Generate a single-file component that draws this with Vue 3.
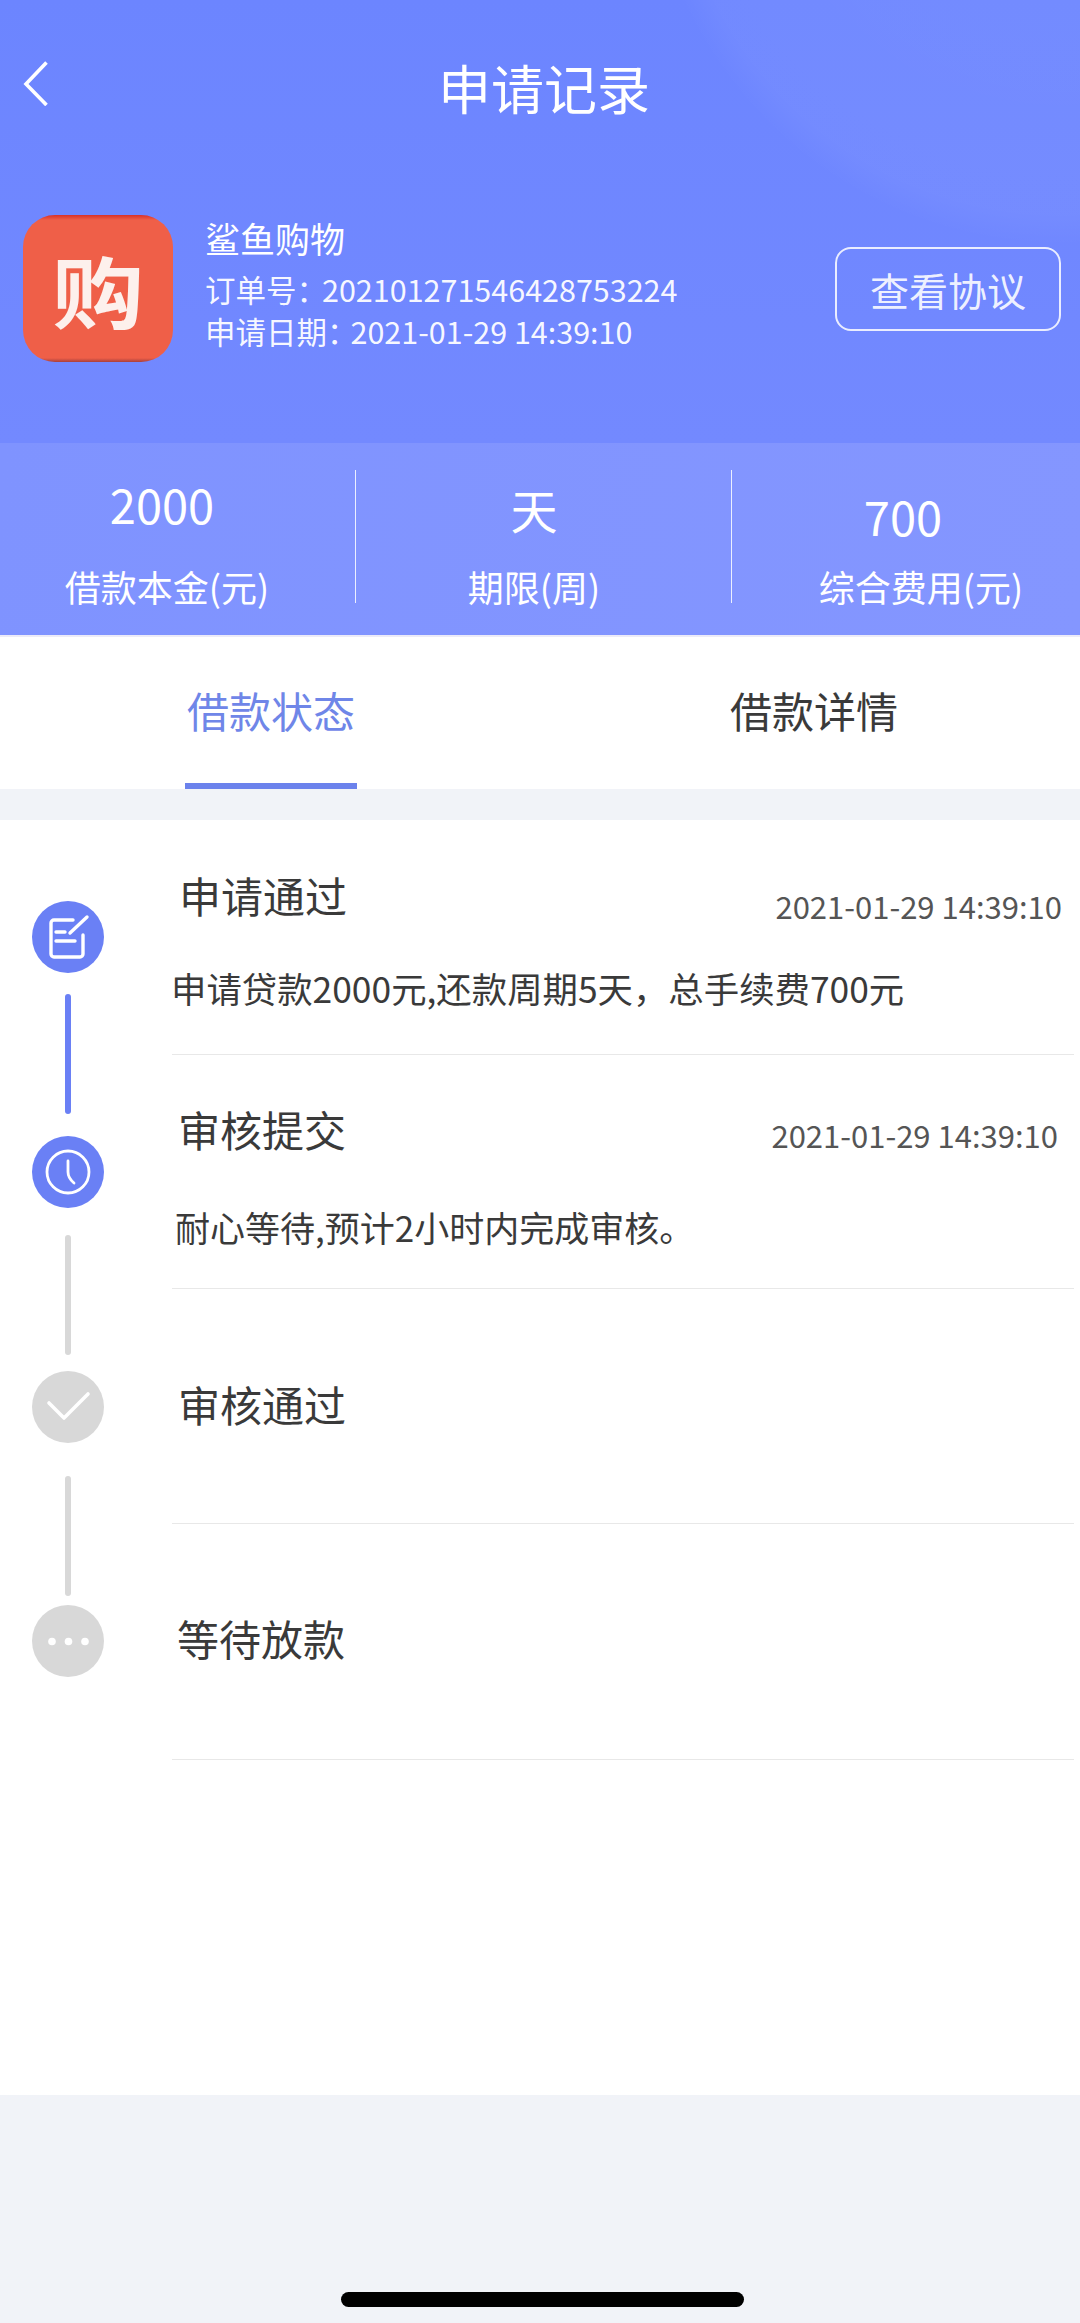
<template>
  <div class="page">
    <header class="head">
      <nav class="nav">
        <svg class="back" viewBox="0 0 25 45" fill="none" stroke="#fff" stroke-width="3.6">
          <path d="M23.5 1.5 3 23l20.5 21" />
        </svg>
        <h1 class="title">申请记录</h1>
      </nav>
      <div class="info">
        <div class="logo"><span>购</span></div>
        <div class="meta">
          <p class="shop">鲨鱼购物</p>
          <p class="line"><span class="line-key line-key--no">订单号：</span>{{ order.no }}</p>
          <p class="line line--date"><span class="line-key line-key--date">申请日期：</span>{{ order.date }}</p>
        </div>
        <button class="agreement">查看协议</button>
      </div>
    </header>

    <section class="stats">
      <div v-for="s in stats" :key="s.label" class="stat" :class="s.cls">
        <span class="stat-value">{{ s.value }}</span>
        <span class="stat-label">{{ s.label }}</span>
      </div>
    </section>

    <div class="tabs">
      <div class="tab tab--on">借款状态</div>
      <div class="tab">借款详情</div>
    </div>

    <main class="timeline">
      <div class="rail">
        <template v-for="(step, i) in steps" :key="step.title">
          <div v-if="i > 0" class="link" :class="[step.link, { 'link--on': step.done }]"></div>
          <div class="dot" :class="{ 'dot--on': step.done }">
            <svg viewBox="0 0 72 72" fill="none" stroke="#fff" stroke-linecap="round" stroke-linejoin="round">
              <g v-if="step.icon === 'note'" stroke-width="3.4">
                <path d="M41 19H22a3 3 0 0 0-3 3v31a3 3 0 0 0 3 3h26a3 3 0 0 0 3-3V34" />
                <path d="M38 32 55 16M24 31h9M24 40h19" />
              </g>
              <g v-else-if="step.icon === 'clock'" stroke-width="2.8">
                <circle cx="36" cy="36" r="21" />
                <path d="M36 25v11q0 6 6 11" />
              </g>
              <path v-else-if="step.icon === 'check'" d="M17 32l15 15 24-24" stroke-width="3.6" />
              <g v-else fill="#fff" stroke="none">
                <circle cx="20" cy="36.500" r="3.800" />
                <circle cx="36.500" cy="36.500" r="3.800" />
                <circle cx="53" cy="36.500" r="3.800" />
              </g>
            </svg>
          </div>
        </template>
      </div>
      <div class="rows">
        <div v-for="step in steps" :key="step.title" class="row" :class="step.cls">
          <div class="row-top">
            <span class="row-title">{{ step.title }}</span>
            <span v-if="step.time" class="row-time">{{ step.time }}</span>
          </div>
          <p v-if="step.desc" class="row-desc">{{ step.desc }}</p>
        </div>
      </div>
    </main>

    <footer class="foot">
      <div class="home-bar"></div>
    </footer>
  </div>
</template>

<script setup>
const order = {
  no: '202101271546428753224',
  date: '2021-01-29 14:39:10',
}

const stats = [
  { value: '2000', label: '借款本金(元)', cls: 'stat--a' },
  { value: '天', label: '期限(周)', cls: 'stat--b' },
  { value: '700', label: '综合费用(元)', cls: 'stat--c' },
]

const steps = [
  {
    title: '申请通过',
    time: '2021-01-29 14:39:10',
    desc: '申请贷款2000元,还款周期5天，总手续费700元',
    icon: 'note',
    done: true,
    cls: 'row--a',
  },
  {
    title: '审核提交',
    time: '2021-01-29 14:39:10',
    desc: '耐心等待,预计2小时内完成审核。',
    icon: 'clock',
    done: true,
    cls: 'row--b',
    link: 'link--a',
  },
  { title: '审核通过', icon: 'check', done: false, cls: 'row--c', link: 'link--b' },
  { title: '等待放款', icon: 'more', done: false, cls: 'row--d', link: 'link--c' },
]
</script>

<style>
html,
body {
  margin: 0;
  background: #f1f3f8;
}
</style>

<style scoped>
.page {
  width: 1080px;
  height: 2323px;
  display: flex;
  flex-direction: column;
  overflow: hidden;
  background: #f1f3f8;
  font-family: "Noto Sans CJK SC", "Noto Sans", sans-serif;
}

p,
h1 {
  margin: 0;
  font-weight: 400;
}

.head {
  height: 443px;
  color: #fff;
  background:
    radial-gradient(circle at 1060px -170px, rgba(255, 255, 255, 0.06) 0, rgba(255, 255, 255, 0.04) 385px, rgba(255, 255, 255, 0) 415px),
    linear-gradient(180deg, #6c85ff 0%, #7389ff 100%);
}

.nav {
  height: 180px;
  display: flex;
  align-items: center;
  padding-left: 23px;
}

.back {
  width: 25px;
  height: 45px;
  margin-top: -13px;
}

.title {
  flex: 1;
  padding: 0 40px 6px 0;
  text-align: center;
  font-size: 53px;
  line-height: 60px;
}

.info {
  display: flex;
  align-items: flex-start;
  padding: 35px 19px 0 23px;
}

.logo {
  width: 150px;
  height: 147px;
  flex: none;
  display: flex;
  align-items: center;
  justify-content: center;
  border-radius: 32px;
  background: linear-gradient(180deg, #d9302a 0, #ef5f48 5px, #ef5f48 143px, #a8403e 147px);
  font-size: 92px;
  font-weight: 700;
  line-height: 1;
  color: #fdf0ec;
}

.logo span {
  transform: scaleY(0.85);
}

.meta {
  padding: 5px 0 0 32px;
}

.shop {
  font-size: 35px;
  line-height: 36px;
}

.line {
  font-size: 30.500px;
  line-height: 41px;
  white-space: nowrap;
  color: rgba(255, 255, 255, 0.95);
}

.line--date {
  margin-top: 1px;
}

.line-key--no {
  margin-right: -5px;
}

.line-key--date {
  margin-right: -7px;
}

.shop + .line {
  margin-top: 13px;
}

.agreement {
  width: 226px;
  height: 84px;
  margin: 32px 0 0 auto;
  padding: 0;
  border: 2px solid rgba(255, 255, 255, 0.85);
  border-radius: 16px;
  background: transparent;
  font: inherit;
  font-size: 39px;
  color: rgba(255, 255, 255, 0.9);
}

.stats {
  height: 192px;
  flex: none;
  display: flex;
  color: #fff;
  background: linear-gradient(100deg, #7f93ff, #8496ff);
  border-bottom: 2px solid #ecebf8;
}

.stat {
  position: relative;
  display: flex;
  flex-direction: column;
  align-items: center;
  box-sizing: border-box;
}

.stat--a {
  width: 356px;
  padding: 27px 22px 0 0;
}

.stat--b {
  width: 376px;
  padding: 27px 20px 0 0;
}

.stat--c {
  width: 348px;
  padding: 39px 0 0 30px;
}

.stat--a::after,
.stat--b::after {
  content: "";
  position: absolute;
  right: 0;
  top: 27px;
  bottom: 32px;
  width: 1px;
  background: rgba(255, 255, 255, 0.85);
}

.stat-value {
  font-size: 47px;
  line-height: 68px;
}

.stat-label {
  margin-top: 23px;
  font-size: 36px;
  line-height: 50px;
}

.stat--a .stat-value {
  margin-left: -10px;
}

.stat--b .stat-value {
  margin-top: 5px;
}

.stat--b .stat-label {
  margin-top: 18px;
}

.stat--c .stat-value {
  margin-left: -36px;
}

.stat--c .stat-label {
  margin-top: 11px;
}

.tabs {
  height: 152px;
  flex: none;
  display: flex;
  gap: 371px;
  background: #fff;
  padding-left: 185px;
}

.tab {
  width: 172px;
  height: 146px;
  line-height: 146px;
  text-align: center;
  font-size: 42px;
  white-space: nowrap;
  color: #3a3a3a;
}

.tab--on {
  color: #6f86e8;
  border-bottom: 6px solid #6b82ec;
}

.timeline {
  flex: none;
  height: 1275px;
  margin-top: 31px;
  display: flex;
  background: #fff;
}

.rail {
  width: 135px;
  display: flex;
  flex-direction: column;
  align-items: center;
  padding-top: 81px;
  flex: none;
}

.dot {
  width: 72px;
  height: 72px;
  flex: none;
  border-radius: 50%;
  background: #d8d8d8;
}

.dot svg {
  display: block;
  width: 72px;
  height: 72px;
}

.dot--on {
  background: #6a80f5;
}

.link {
  width: 6px;
  height: 120px;
  flex: none;
  border-radius: 3px;
  background: #d8d8d8;
}

.link--a {
  margin: 21px 0 22px;
}

.link--b {
  margin: 27px 0 16px;
}

.link--c {
  margin: 33px 0 9px;
}

.link--on {
  background: #6a80f5;
}

.rows {
  flex: 1;
  padding-left: 37px;
  padding-right: 6px;
}

.row {
  height: 234.500px;
  box-sizing: border-box;
  border-bottom: 1px solid #e8e8e8;
  color: #3a3a3a;
}

.row-top {
  display: flex;
  justify-content: space-between;
  padding: 46px 12px 0 7px;
}

.row-title {
  font-size: 42px;
  line-height: 58px;
}

.row-time {
  font-size: 31px;
  line-height: 40px;
  margin-top: 20px;
  color: #555;
}

.row-desc {
  margin: 38px 0 0 -1px;
  font-size: 35.400px;
  line-height: 48px;
}

.row--b .row-top {
  padding: 45px 16px 0 6px;
}

.row--b .row-time {
  margin-top: 15px;
}

.row--b .row-desc {
  margin: 45px 0 0 3px;
  font-size: 35px;
}

.row--c .row-top {
  padding-top: 86px;
  padding-left: 6px;
}

.row--d {
  height: 236px;
}

.row--d .row-top {
  padding-top: 85px;
  padding-left: 5px;
}

.foot {
  flex: 1;
  padding: 197px 0 0 341px;
}

.home-bar {
  width: 403px;
  height: 15px;
  border-radius: 8px;
  background: #000;
}
</style>
